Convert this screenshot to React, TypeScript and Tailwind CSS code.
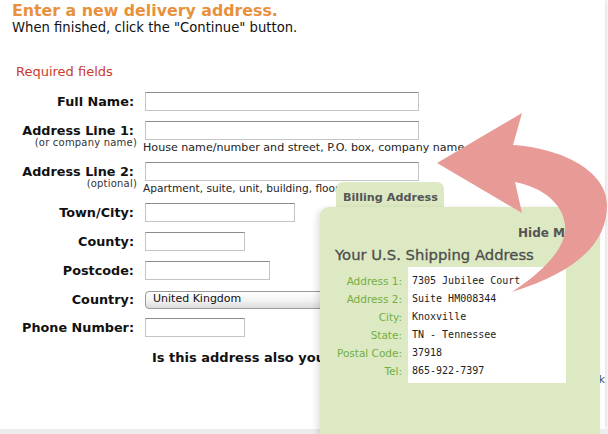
import React from "react";

const inputCls =
  "h-[19px] border border-[#c4c4c4] border-t-[#8c8c8c] bg-white";

function Row({
  label,
  width,
  children,
}: {
  label: string;
  width?: number;
  children?: React.ReactNode;
}) {
  return (
    <div className="flex items-center h-[19px]">
      <div className="w-[134px] text-right text-[12.8px] font-bold text-[#111] leading-[16px] whitespace-nowrap">
        {label}
      </div>
      <div className="ml-[11px]">
        {children ?? <div className={inputCls} style={{ width }} />}
      </div>
    </div>
  );
}

function SubLine({ sub, hint, size }: { sub: string; hint: string; size: string }) {
  return (
    <div className="flex h-[14px]">
      <div className="w-[137px] text-right text-[10px] leading-[12px] -mt-[3px] text-[#333] whitespace-nowrap tracking-[0.2px]">
        {sub}
      </div>
      <div className={"ml-[6px] mt-[1px] leading-[13px] text-[#222] whitespace-nowrap " + size}>
        {hint}
      </div>
    </div>
  );
}

const ship = [
  ["Address 1:", "7305 Jubilee Court"],
  ["Address 2:", "Suite HM008344"],
  ["City:", "Knoxville"],
  ["State:", "TN - Tennessee"],
  ["Postal Code:", "37918"],
  ["Tel:", "865-922-7397"],
];

export default function App() {
  return (
    <div
      className="relative w-[608px] h-[434px] overflow-hidden bg-white flex flex-col"
      style={{ fontFamily: '"DejaVu Sans", Verdana, sans-serif' }}
    >
      <div className="flex-1 bg-white shadow-[2px_0_4px_rgba(0,0,0,0.12)] mr-[3px] overflow-hidden">
        <div className="pl-[12px] pt-[2px]">
          <div className="text-[15.8px] leading-[18px] font-bold text-[#e8913c] whitespace-nowrap">
            Enter a new delivery address.
          </div>
          <div className="text-[13.2px] leading-[16px] text-[#111] whitespace-nowrap">
            When finished, click the "Continue" button.
          </div>
        </div>
        <div className="pl-[16px] mt-[28px] text-[13px] leading-[16px] text-[#c83a2e]">
          Required fields
        </div>
        <div className="mt-[12px]">
          <div className="mb-[10px]">
            <Row label="Full Name:" width={274} />
          </div>
          <Row label="Address Line 1:" width={274} />
          <div className="mb-[8px]">
            <SubLine
              sub="(or company name)"
              hint="House name/number and street, P.O. box, company name, c/o"
              size="text-[11.1px]"
            />
          </div>
          <Row label="Address Line 2:" width={274} />
          <div className="mb-[8px]">
            <SubLine
              sub="(optional)"
              hint="Apartment, suite, unit, building, floor,"
              size="text-[10.6px]"
            />
          </div>
          <div className="mb-[10px]">
            <Row label="Town/City:" width={150} />
          </div>
          <div className="mb-[10px]">
            <Row label="County:" width={100} />
          </div>
          <div className="mb-[10px]">
            <Row label="Postcode:" width={125} />
          </div>
          <div className="mb-[9px]">
            <Row label="Country:">
              <div className="h-[18px] w-[300px] rounded-[4px] border border-[#9a9a9a] bg-gradient-to-b from-white via-[#f4f4f4] to-[#dcdcdc] flex items-center pl-[7px] text-[11px] text-[#111]">
                United Kingdom
              </div>
            </Row>
          </div>
          <Row label="Phone Number:" width={100} />
          <div className="mt-[13px] ml-[152px] text-[13px] leading-[16px] font-bold text-[#111] whitespace-nowrap">
            Is this address also you
          </div>
          <div className="mt-[6px] flex justify-end pr-[0px] text-[11px] leading-[16px] text-[#4b5a68] whitespace-nowrap">
            k
          </div>
        </div>
      </div>
      <div className="h-[5px] bg-[#ededed]" />

      {/* Billing address panel */}
      <div className="absolute left-[320px] top-[182px] w-[280px] bottom-0 flex flex-col">
        <div className="ml-[16px] w-[108px] h-[26px] rounded-t-[7px] bg-[#dce9c2] pl-[7px] pt-[8px] text-[11.2px] leading-[16px] font-bold text-[#555] whitespace-nowrap">
          Billing Address
        </div>
        <div className="-mt-[1px] flex-1 rounded-tl-[9px] bg-[#dce9c2] shadow-[-3px_2px_6px_rgba(0,0,0,0.12)]">
          <div className="pl-[198px] pt-[18px] text-[12px] leading-[16px] font-bold text-[#555] whitespace-nowrap">
            Hide Me
          </div>
          <div className="pl-[15px] mt-[5px] text-[14.8px] leading-[18px] text-[#4e4e4e] whitespace-nowrap [-webkit-text-stroke:0.3px_#4e4e4e]">
            Your U.S. Shipping Address
          </div>
          <div className="flex mt-[3px] pl-[15px]">
            <div className="w-[67px] pt-[5px] flex flex-col">
              {ship.map(([l]) => (
                <div
                  key={l}
                  className="h-[18px] text-right text-[10.5px] leading-[18px] text-[#72b043] whitespace-nowrap"
                >
                  {l}
                </div>
              ))}
            </div>
            <div className="ml-[6px] w-[158px] h-[116px] bg-white pt-[5px] pl-[4px] flex flex-col">
              {ship.map(([l, v]) => (
                <div
                  key={l}
                  className="h-[18px] text-[10px] leading-[18px] text-[#222] whitespace-nowrap"
                  style={{ fontFamily: '"DejaVu Sans Mono", monospace' }}
                >
                  {v}
                </div>
              ))}
            </div>
          </div>
        </div>
      </div>

      {/* Curved arrow */}
      <svg
        className="absolute inset-0 pointer-events-none"
        width="608"
        height="434"
        viewBox="0 0 608 434"
      >
        <path
          d="M437 163 L522 113 L513 145 C560 148 607 170 607 205 C607 240 582 270 512 292 C553 265 567 242 565 225 C563 205 545 188 515 182 L522 213 Z"
          fill="#e89a96"
        />
      </svg>
    </div>
  );
}
